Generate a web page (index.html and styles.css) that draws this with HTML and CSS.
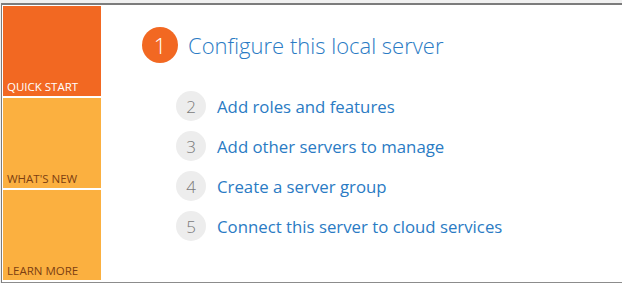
FILE: index.html
```html
<!DOCTYPE html>
<html lang="en">
<head>
    <meta charset="UTF-8">
    <title>Welcome to Server Manager</title>
    <link rel="stylesheet" href="styles.css">
</head>
<body>
    <!-- Welcome frame -->
    <div class="frame">
        <!-- Side tiles -->
        <div class="tiles">
            <div class="tile tile-active">QUICK START</div>
            <div class="tile">WHAT'S NEW</div>
            <div class="tile">LEARN MORE</div>
        </div>

        <!-- Steps -->
        <div class="steps">
            <div class="step-main">
                <span class="num num-main">1</span>
                <span class="step-title">Configure this local server</span>
            </div>
            <ul class="step-list">
                <li><span class="num">2</span><span class="step-link">Add roles and features</span></li>
                <li><span class="num">3</span><span class="step-link">Add other servers to manage</span></li>
                <li><span class="num">4</span><span class="step-link">Create a server group</span></li>
                <li><span class="num">5</span><span class="step-link">Connect this server to cloud services</span></li>
            </ul>
        </div>
    </div>
</body>
</html>
```

FILE: styles.css
```css
/* Global */
body {
    margin: 0;
    background: #f0f0f0;
    font-family: "Open Sans", "Noto Sans", sans-serif;
}

/* Frame */
.frame {
    display: flex;
    margin: 3px 0 0 1px;
    height: 276px;
    padding: 1px 0 0 1px;
    background: white;
    border-top: 2px solid #7c7c7c;
    border-left: 1px solid #7c7c7c;
    border-bottom: 2px solid #8c8c8c;
}

/* Tiles */
.tiles {
    display: flex;
    flex-direction: column;
    gap: 2px;
    width: 98px;
}
.tile {
    height: 90px;
    background: #fbb040;
    color: #7d3f12;
    font-size: 11.5px;
    display: flex;
    align-items: flex-end;
    padding: 0 0 2px 4px;
    box-sizing: border-box;
}
.tile-active {
    background: #f26822;
    color: white;
}

/* Steps */
.steps {
    padding: 21px 0 0 41px;
}
.step-main {
    display: flex;
    align-items: center;
    gap: 10px;
}
.num {
    width: 30px;
    height: 30px;
    border-radius: 50%;
    background: #ededed;
    color: #7a7a7a;
    font-size: 17px;
    font-weight: 300;
    display: flex;
    align-items: center;
    justify-content: center;
    flex-shrink: 0;
}
.num-main {
    width: 36px;
    height: 36px;
    background: #f26822;
    color: white;
    font-size: 22px;
}
.step-title {
    color: #2a7bc4;
    font-size: 22px;
    font-weight: 300;
}
.step-list {
    list-style: none;
    margin: 28px 0 0 34px;
    padding: 0;
}
.step-list li {
    display: flex;
    align-items: center;
    gap: 11px;
    height: 30px;
    margin-bottom: 10px;
}
.step-link {
    color: #2a7bc4;
    font-size: 16.8px;
}
```
